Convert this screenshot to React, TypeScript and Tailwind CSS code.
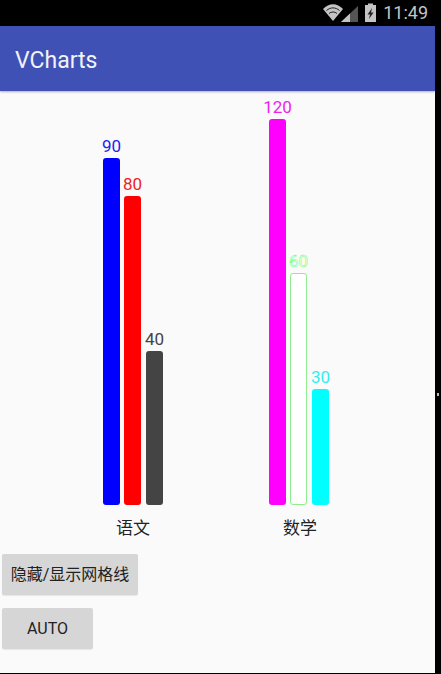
import React from "react";

type Bar = { value: number; height: number; color: string; labelClass: string; outlined?: boolean };

const groups: { name: string; bars: Bar[] }[] = [
  {
    name: "语文",
    bars: [
      { value: 90, height: 347, color: "bg-[#0000ff]", labelClass: "text-[#2222ee]" },
      { value: 80, height: 309, color: "bg-[#ff0000]", labelClass: "text-[#ee2222]" },
      { value: 40, height: 154, color: "bg-[#444444]", labelClass: "text-[#444444]" },
    ],
  },
  {
    name: "数学",
    bars: [
      { value: 120, height: 386, color: "bg-[#ff00ff]", labelClass: "text-[#ee22ee]" },
      {
        value: 60,
        height: 232,
        color: "bg-white",
        labelClass: "text-[#f4fff4] [-webkit-text-stroke:0.4px_#44ff44]",
        outlined: true,
      },
      { value: 30, height: 116, color: "bg-[#00ffff]", labelClass: "text-[#33eeee]" },
    ],
  },
];

function StatusIcons() {
  return (
    <svg width="56" height="20" viewBox="0 0 56 20" className="text-[#c4c4c4]">
      <path d="M1 6 C7 -0.5 15 -0.5 21 6 L11 18 Z" fill="currentColor" />
      <path d="M4.5 7.5 C8.5 4 13.5 4 17.5 7.5 M7 10.5 C9.5 8.5 12.5 8.5 15 10.5" stroke="#222222" strokeWidth="1" fill="none" />
      <path d="M19 19 L36 3 L36 19 Z" fill="#555555" />
      <path d="M19 19 L28 10.5 L28 19 Z" fill="currentColor" />
      <rect x="43" y="2" width="11" height="17" fill="currentColor" />
      <rect x="46" y="0.5" width="5" height="2" fill="currentColor" />
      <path d="M50 5 L45.5 11.5 L48 11.5 L47 16 L51.5 9.5 L49 9.5 Z" fill="#222222" />
    </svg>
  );
}

export default function App() {
  return (
    <div className="relative h-[674px] w-[441px] overflow-hidden bg-black font-['Roboto','Noto_Sans_CJK_SC',sans-serif]">
      <header className="flex h-[26px] items-center justify-end bg-black pr-[13px]">
        <StatusIcons />
        <span className="ml-[5px] text-[18px] leading-none text-[#c4c4c4]">11:49</span>
      </header>

      <div className="h-[647px] w-[435px] bg-[#fafafa]">
        <div className="flex h-[65px] items-center bg-[#3f51b5] pl-[15px] pt-[5px] shadow-[0_1px_2px_rgba(0,0,0,0.3)]">
          <h1 className="text-[23px] font-normal text-[#f2f2fa]">VCharts</h1>
        </div>

        <main className="flex h-[414px] items-end pl-[103px]">
          {groups.map((group) => (
            <div key={group.name} className="flex w-[166px] items-end gap-[4px]">
              {group.bars.map((bar) => (
                <div key={bar.value} className="flex w-[17px] flex-col items-center last:ml-[1px]">
                  <span className={`mb-[1px] whitespace-nowrap text-[17px] leading-[22px] ${bar.labelClass}`}>{bar.value}</span>
                  <div
                    className={`w-full rounded-[3px] ${bar.color} ${bar.outlined ? "border border-[#90ee90]" : ""}`}
                    style={{ height: bar.height }}
                  />
                </div>
              ))}
            </div>
          ))}
        </main>

        <div className="flex pl-[103px] pt-[12px] text-[17px] leading-[22px] text-[#222222]">
          <span className="w-[166px] pl-[13px]">语文</span>
          <span className="pl-[14px]">数学</span>
        </div>

        <div className="flex flex-col items-start gap-[13px] pl-[2px] pt-[15px] text-[16px] leading-none text-[#222222]">
          <button className="h-[41px] w-[136px] rounded-[2px] bg-[#d6d6d6] shadow-[0_1px_1px_rgba(0,0,0,0.08)]">隐藏/显示网格线</button>
          <button className="h-[41px] w-[91px] rounded-[2px] bg-[#d6d6d6] shadow-[0_1px_1px_rgba(0,0,0,0.08)]">AUTO</button>
        </div>
      </div>

      <span className="absolute left-[437px] top-[393px] h-[3px] w-[2px] bg-[#bbbbbb]" />
    </div>
  );
}
